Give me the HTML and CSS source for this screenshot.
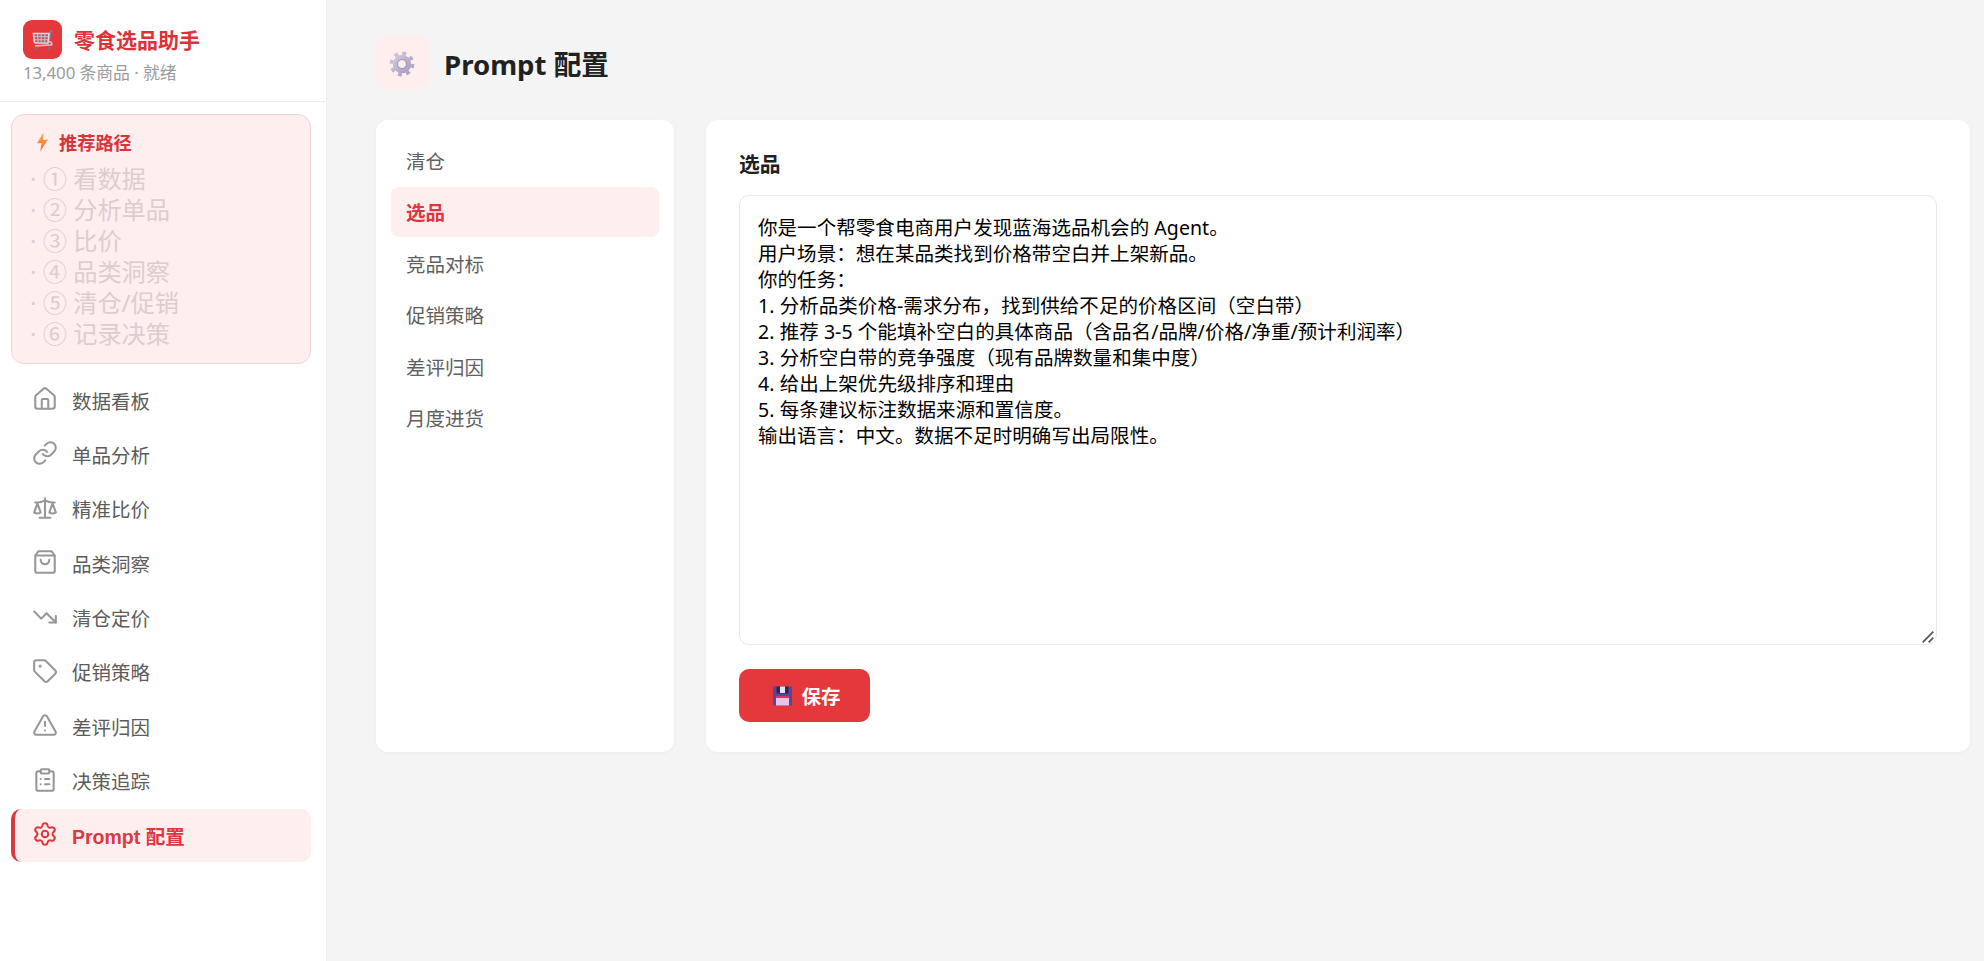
FILE: index.html
```html
<!DOCTYPE html>
<html lang="zh-CN">
  <head>
    <meta charset="UTF-8" />
    <meta name="viewport" content="width=device-width, initial-scale=1.0" />
    <title>Prompt 配置 - 零食选品助手</title>
    <link rel="stylesheet" href="styles.css">
  </head>

  <body>
    <aside class="sidebar">
      <div class="brand">
        <div class="brand-row">
          <span class="brand-logo">
            <svg width="22" height="22" viewBox="0 0 22 22" fill="none">
              <path d="M20.5 1.500 18.500 3 17 14.2" stroke="#71849a" stroke-width="1.6" />
              <path d="M1.5 4.5H17L16 14H4Q2.6 14 2.3 12.5Z" stroke="#ead6de" stroke-width="1.6" fill="#b9585f" />
              <path d="M2 7.6h14.5M2.4 10.8h14M5.5 4.5l.6 9.2M9.2 4.5v9.2M13 4.5l-.3 9.2" stroke="#c9c3cf" stroke-width="1" />
              <path d="M16.5 12.5q4 .5 3.300 3.200L3 17" stroke="#d5ccd6" stroke-width="1.5" />
              <circle cx="4" cy="18.9" r="1.5" fill="#6f7488" />
              <circle cx="17" cy="18.9" r="1.5" fill="#6f7488" />
            </svg>
          </span>
          <span class="brand-name">零食选品助手</span>
        </div>
        <div class="brand-status">13,400 条商品 · 就绪</div>
      </div>

      <div class="path-card">
        <div class="path-title">
          <svg class="bolt" width="11" height="20" viewBox="0 0 11 20">
            <defs>
              <linearGradient id="bolt" x1="0" y1="0" x2="0" y2="1">
                <stop offset="0" stop-color="#fbb04a" />
                <stop offset="1" stop-color="#f4693c" />
              </linearGradient>
            </defs>
            <path d="M6.500 .5 0 11.200h4.500L3.200 19.500l7.600-11.700H6Z" fill="url(#bolt)" />
          </svg>
          <span>推荐路径</span>
        </div>
        <div class="path-step">· ① 看数据</div>
        <div class="path-step">· ② 分析单品</div>
        <div class="path-step">· ③ 比价</div>
        <div class="path-step">· ④ 品类洞察</div>
        <div class="path-step">· ⑤ 清仓/促销</div>
        <div class="path-step">· ⑥ 记录决策</div>
      </div>

      <nav class="nav">
        <a class="nav-item">
          <svg class="icon" viewBox="0 0 24 24"><path d="M15 21v-8a1 1 0 0 0-1-1h-4a1 1 0 0 0-1 1v8" /><path d="M3 10a2 2 0 0 1 .709-1.528l7-6a2 2 0 0 1 2.582 0l7 6A2 2 0 0 1 21 10v9a2 2 0 0 1-2 2H5a2 2 0 0 1-2-2z" /></svg>
          <span>数据看板</span>
        </a>
        <a class="nav-item">
          <svg class="icon" viewBox="0 0 24 24"><path d="M10 13a5 5 0 0 0 7.54.54l3-3a5 5 0 0 0-7.07-7.07l-1.72 1.71" /><path d="M14 11a5 5 0 0 0-7.54-.54l-3 3a5 5 0 0 0 7.07 7.07l1.71-1.71" /></svg>
          <span>单品分析</span>
        </a>
        <a class="nav-item">
          <svg class="icon" viewBox="0 0 24 24"><path d="m16 16 3-8 3 8c-.87.65-1.92 1-3 1s-2.13-.35-3-1Z" /><path d="m2 16 3-8 3 8c-.87.65-1.92 1-3 1s-2.13-.35-3-1Z" /><path d="M7 21h10M12 3v18M3 7h2c2 0 5-1 7-2 2 1 5 2 7 2h2" /></svg>
          <span>精准比价</span>
        </a>
        <a class="nav-item">
          <svg class="icon" viewBox="0 0 24 24"><path d="M6 2 3 6v14a2 2 0 0 0 2 2h14a2 2 0 0 0 2-2V6l-3-4ZM3 6h18M16 10a4 4 0 0 1-8 0" /></svg>
          <span>品类洞察</span>
        </a>
        <a class="nav-item">
          <svg class="icon" viewBox="0 0 24 24"><path d="m22 17-8.500-8.500-5 5L2 7" /><path d="M16 17h6v-6" /></svg>
          <span>清仓定价</span>
        </a>
        <a class="nav-item">
          <svg class="icon" viewBox="0 0 24 24"><path d="M12.586 2.586A2 2 0 0 0 11.172 2H4a2 2 0 0 0-2 2v7.172a2 2 0 0 0 .586 1.414l8.704 8.704a2.426 2.426 0 0 0 3.420 0l6.580-6.580a2.426 2.426 0 0 0 0-3.420z" /><circle cx="7.500" cy="7.500" r=".5" /></svg>
          <span>促销策略</span>
        </a>
        <a class="nav-item">
          <svg class="icon" viewBox="0 0 24 24"><path d="m21.730 18-8-14a2 2 0 0 0-3.480 0l-8 14A2 2 0 0 0 4 21h16a2 2 0 0 0 1.730-3M12 9v4M12 17h.01" /></svg>
          <span>差评归因</span>
        </a>
        <a class="nav-item">
          <svg class="icon" viewBox="0 0 24 24"><rect x="8" y="2" width="8" height="4" rx="1" /><path d="M16 4h2a2 2 0 0 1 2 2v14a2 2 0 0 1-2 2H6a2 2 0 0 1-2-2V6a2 2 0 0 1 2-2h2M12 11h4M12 16h4M8 11h.01M8 16h.01" /></svg>
          <span>决策追踪</span>
        </a>
        <a class="nav-item active">
          <svg class="icon" viewBox="0 0 24 24"><path d="M9.671 4.136a2.340 2.340 0 0 1 4.659 0 2.340 2.340 0 0 0 3.319 1.915 2.340 2.340 0 0 1 2.330 4.033 2.340 2.340 0 0 0 0 3.831 2.340 2.340 0 0 1-2.330 4.033 2.340 2.340 0 0 0-3.319 1.915 2.340 2.340 0 0 1-4.659 0 2.340 2.340 0 0 0-3.320-1.915 2.340 2.340 0 0 1-2.330-4.033 2.340 2.340 0 0 0 0-3.831A2.340 2.340 0 0 1 6.350 6.051a2.340 2.340 0 0 0 3.319-1.915" /><circle cx="12" cy="12" r="3" /></svg>
          <span>Prompt 配置</span>
        </a>
      </nav>
    </aside>

    <main class="main">
      <header class="page-header">
        <span class="page-icon">
          <svg width="26" height="26" viewBox="-13 -13 26 26">
            <defs>
              <linearGradient id="gear" x1="0" y1="0" x2="1" y2="1">
                <stop offset="0" stop-color="#cfc6dc" />
                <stop offset="1" stop-color="#ab9fc4" />
              </linearGradient>
            </defs>
            <circle r="10.600" fill="none" stroke="url(#gear)" stroke-width="3.600" stroke-dasharray="4 4.325" />
            <circle r="6.700" fill="none" stroke="url(#gear)" stroke-width="5" />
            <circle r="4.500" fill="none" stroke="#a196b4" stroke-width="1" />
          </svg>
        </span>
        <h1>Prompt 配置</h1>
      </header>

      <div class="content">
        <section class="card prompt-list">
          <div class="prompt-item">清仓</div>
          <div class="prompt-item selected">选品</div>
          <div class="prompt-item">竞品对标</div>
          <div class="prompt-item">促销策略</div>
          <div class="prompt-item">差评归因</div>
          <div class="prompt-item">月度进货</div>
        </section>

        <section class="card editor">
          <h2>选品</h2>
          <div class="editor-box">
            <textarea class="prompt-text" spellcheck="false">你是一个帮零食电商用户发现蓝海选品机会的 Agent。
用户场景：想在某品类找到价格带空白并上架新品。
你的任务：
1. 分析品类价格-需求分布，找到供给不足的价格区间（空白带）
2. 推荐 3-5 个能填补空白的具体商品（含品名/品牌/价格/净重/预计利润率）
3. 分析空白带的竞争强度（现有品牌数量和集中度）
4. 给出上架优先级排序和理由
5. 每条建议标注数据来源和置信度。
输出语言：中文。数据不足时明确写出局限性。</textarea>
            <svg class="grip" width="12" height="12" viewBox="0 0 12 12"><path d="M.7 11.300 11.300.7M6.700 11.300l4.600-4.600" stroke="#55555c" stroke-width="1.700" /></svg>
          </div>
          <button class="save-btn">
            <svg width="19" height="20" viewBox="0 0 19 20">
              <path d="M0 1.500Q0 .5 1 .5h17q1 0 1 1V19.500H1.500L0 18Z" fill="#57479b" />
              <path d="M3.500.5h12v7h-12z" fill="#30254f" />
              <path d="M7 .5h5v6.500H7z" fill="#e6e2ee" />
              <path d="M3 11h13v8.500H3z" fill="#e6c5e6" />
              <path d="M3 10h13v2H3z" fill="#c83a68" />
            </svg>
            <span>保存</span>
          </button>
        </section>
      </div>
    </main>
  </body>
</html>
```

FILE: styles.css
```css
* {
  box-sizing: border-box;
}

body {
  display: flex;
  height: 100vh;
  margin: 0;
  overflow: hidden;
  background: #f4f4f4;
  color: #1f2223;
  font-family: "Noto Sans", "Noto Sans CJK SC", sans-serif;
}

h1,
h2 {
  margin: 0;
}

.sidebar {
  flex: none;
  width: 327px;
  background: #fff;
  border-right: 1px solid #efefef;
}

.brand {
  height: 102px;
  padding: 20px 23px 0;
  border-bottom: 1px solid #ececec;
}

.brand-row {
  display: flex;
  align-items: center;
  gap: 12px;
}

.brand-logo {
  display: flex;
  align-items: center;
  justify-content: center;
  width: 39px;
  height: 39px;
  border-radius: 9px;
  background: #e4383c;
}

.brand-name {
  padding-top: 2px;
  color: #dc3238;
  font-size: 21px;
  font-weight: 700;
  line-height: 37px;
}

.brand-status {
  color: #9c9c9c;
  font-size: 16.9px;
  line-height: 27px;
  letter-spacing: -0.1px;
}

.path-card {
  width: 300px;
  height: 250px;
  margin: 12px 0 0 11px;
  padding: 13px 18px;
  border: 1px solid #f3d3d6;
  border-radius: 13px;
  background: #ffeeee;
}

.path-title {
  display: flex;
  align-items: center;
  gap: 11px;
  height: 28px;
  margin-bottom: 7px;
  padding-left: 7px;
  color: #dc3238;
  font-size: 18.2px;
  font-weight: 700;
}

.path-step {
  color: #dccdce;
  font-size: 24.2px;
  line-height: 31px;
}

.nav {
  display: flex;
  flex-direction: column;
  gap: 1.4px;
  margin: 10px 15px 0 11px;
}

.nav-item {
  display: flex;
  align-items: center;
  gap: 14px;
  height: 53px;
  padding-bottom: 1px;
  padding-left: 21px;
  border-radius: 10px;
  color: #5c5c5c;
  font-family: "Liberation Sans", "Noto Sans CJK SC", sans-serif;
  font-size: 19.5px;
}

.nav-item.active {
  padding-left: 17px;
  border-left: 4px solid #dc3840;
  background: #ffeeee;
  color: #dc3840;
  font-weight: 700;
}

.icon {
  width: 26px;
  height: 26px;
  margin-bottom: 2px;
  fill: none;
  stroke: #979797;
  stroke-width: 1.9;
  stroke-linecap: round;
  stroke-linejoin: round;
}

.active .icon {
  stroke: #dc3840;
}

.main {
  flex: 1;
  padding: 35px 14px 0 48px;
}

.page-header {
  display: flex;
  align-items: center;
  gap: 15px;
  height: 55px;
  margin-bottom: 30px;
}

.page-icon {
  display: flex;
  align-items: center;
  justify-content: center;
  width: 54px;
  height: 55px;
  padding-top: 2px;
  border-radius: 13px;
  background: #ffeeee;
}

h1 {
  padding-top: 2px;
  font-size: 27.6px;
  line-height: 40px;
}

.content {
  display: flex;
  gap: 32px;
  height: 632px;
  padding-left: 1px;
}

.card {
  border-radius: 12px;
  background: #fff;
  box-shadow: 0 1px 4px rgba(0, 0, 0, 0.03);
}

.prompt-list {
  display: flex;
  flex-direction: column;
  gap: 1.5px;
  width: 298px;
  padding: 15.5px 15px;
}

.prompt-item {
  height: 50px;
  padding-left: 15px;
  border-radius: 8px;
  color: #5f5f5f;
  font-size: 19.5px;
  line-height: 52px;
}

.prompt-item.selected {
  background: #ffeeee;
  color: #dc3840;
  font-weight: 700;
}

.editor {
  flex: 1;
  padding: 28px 33px;
}

h2 {
  margin-bottom: 15px;
  font-size: 20.8px;
  line-height: 32px;
}

.editor-box {
  position: relative;
  height: 450px;
  margin-bottom: 24px;
}

.prompt-text {
  display: block;
  width: 100%;
  height: 100%;
  padding: 19px 18px;
  border: 1px solid #e9e9e9;
  border-radius: 10px;
  outline: none;
  resize: none;
  background: #fff;
  color: #000;
  font-family: "Noto Sans", "Noto Sans CJK SC", sans-serif;
  font-size: 19.5px;
  line-height: 26px;
  letter-spacing: 0.06px;
}

.grip {
  position: absolute;
  right: 3px;
  bottom: 2px;
}

.save-btn {
  display: flex;
  align-items: center;
  justify-content: center;
  gap: 9px;
  width: 131px;
  height: 53px;
  padding: 0 0 0 5px;
  border: none;
  border-radius: 10px;
  background: #e4383c;
  color: #fff;
  cursor: pointer;
  font-family: "Noto Sans", "Noto Sans CJK SC", sans-serif;
  font-size: 19.5px;
  font-weight: 700;
}
```
